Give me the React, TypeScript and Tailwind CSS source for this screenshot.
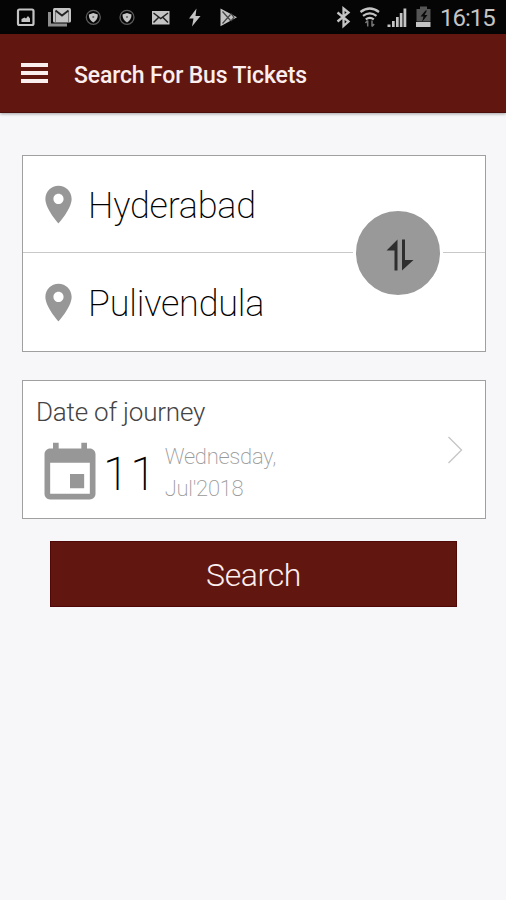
import type { ReactNode } from "react";

const StatusIcons = () => (
  <svg width="240" height="34" viewBox="0 0 240 34" fill="#c4c4c4">
    {/* picture */}
    <rect x="18" y="9.500" width="15.500" height="15.500" rx="1.500" fill="none" stroke="#c4c4c4" strokeWidth="2.200" />
    <path d="M21.500 22v-3l3-1.500 1.500 1 2-2.500 2 2.500v3.500z" />
    {/* stacked mail */}
    <path d="M49.500 12v13H67" fill="none" stroke="#8d8d8d" strokeWidth="3" />
    <rect x="53" y="8" width="18" height="14.500" rx="1.500" />
    <path d="M55.500 22V11M68.500 22V11" fill="none" stroke="#777" strokeWidth="1" />
    <path d="M55.500 10.500l6.500 5 6.500-5" fill="none" stroke="#222" strokeWidth="1.800" />
    {/* round badges */}
    <circle cx="93.300" cy="17.300" r="7" fill="none" stroke="#5c5c5c" strokeWidth="1.300" />
    <path d="M88.800 14.500l4.500-1.500 4.500 1.500c0 4-1.500 6-4.500 8-3-2-4.500-4-4.500-8z" />
    <circle cx="93.300" cy="17" r="1.100" fill="#666" />
    <circle cx="127" cy="17.300" r="7" fill="none" stroke="#5c5c5c" strokeWidth="1.300" />
    <path d="M122.500 14.500l4.500-1.500 4.500 1.500c0 4-1.500 6-4.500 8-3-2-4.500-4-4.500-8z" />
    <circle cx="127" cy="17" r="1.100" fill="#666" />
    {/* envelope */}
    <rect x="152" y="11" width="17.500" height="13.500" />
    <path d="M153.500 13l7.200 5.500 7.300-5.500M153.500 22.500l5-5M168 22.500l-5-5" fill="none" stroke="#222" strokeWidth="1.500" />
    {/* bolt */}
    <path d="M196.500 8.500l-7.500 10h4.500l-1.500 8 8.500-10.500h-5z" />
    {/* play */}
    <path d="M220.500 8.500L237 17.300l-16.500 9z" />
    <path d="M222.500 11.500l8 9M222.500 23.500l8-9M231 13.500l3 3.800-3 3.700" fill="none" stroke="#444" strokeWidth="1.200" />
  </svg>
);

const SystemIcons = () => (
  <svg width="100" height="34" viewBox="334 0 100 34" fill="#c4c4c4">
    {/* bluetooth */}
    <path d="M337.500 12.500l11 9-5 4.500V8.500l5 4-11 9" fill="none" stroke="#c4c4c4" strokeWidth="2.300" />
    {/* wifi with transfer arrows */}
    <g fill="none" stroke="#c4c4c4" strokeWidth="2.200">
      <path d="M360.500 12q9.300-7 18.500 0" />
      <path d="M363 15.800q6.800-5 13.500 0" />
      <path d="M365.800 19.300q4-3 8 0" />
    </g>
    <path d="M367.700 20.500v6M365.500 23l2.200-2.500M372 20.500v6M374.200 24l-2.200 2.500" fill="none" stroke="#777" strokeWidth="1.500" />
    {/* signal */}
    <path d="M387.500 24.500h3v2.500h-3zM392 21h2.700v6H392zM396 17h2.700v10H396zM399.800 13h2.700v14h-2.700zM403.500 8.500h2.800V27h-2.800z" />
    {/* battery */}
    <path d="M420 6.500h7V9h3.500v12.500h-14V9h3.500z" fill="#555" />
    <path d="M416 22h14.500v5H416z" />
    <path d="M425.500 10.500l-5 6h3l-1.500 5.500 5.500-7h-3l2.500-4.500z" fill="#0a0a0a" />
  </svg>
);

const PinIcon = () => (
  <svg className="size-[45px] shrink-0" viewBox="0 0 24 24" fill="#979797">
    <path d="M12 2C8.130 2 5 5.130 5 9c0 5.250 7 13 7 13s7-7.750 7-13c0-3.870-3.130-7-7-7zm0 9.700c-1.500 0-2.700-1.200-2.700-2.700s1.200-2.700 2.700-2.700 2.700 1.200 2.700 2.700-1.200 2.700-2.700 2.700z" />
  </svg>
);

const CalendarIcon = () => (
  <svg className="size-[68px] shrink-0" viewBox="0 0 24 24" fill="#979797">
    <path d="M17 12h-5v5h5v-5zM16 1v2H8V1H6v2H5c-1.110 0-1.990.9-1.990 2L3 19c0 1.100.89 2 2 2h14c1.100 0 2-.9 2-2V5c0-1.100-.9-2-2-2h-1V1h-2zm3 18H5V8h14v11z" />
  </svg>
);

const PlaceRow = ({ children }: Readonly<{ children: ReactNode }>) => (
  <div className="flex flex-1 items-center pl-[13px]">
    <PinIcon />
    <span className="ml-[7px] pt-[4px] text-[36px] leading-none font-[200] tracking-[-0.2px] text-black">
      {children}
    </span>
  </div>
);

export default function App() {
  return (
    <div className="h-[900px] w-[506px] overflow-hidden bg-[#f7f7fa] font-['Roboto',sans-serif]">
      <div className="flex h-[34px] items-center bg-[#050505]">
        <StatusIcons />
        <div className="ml-[94px]">
          <SystemIcons />
        </div>
        <span className="ml-[6px] pt-[2px] text-[24px] leading-none tracking-[-1px] whitespace-nowrap text-[#c4c4c4]">16:15</span>
      </div>

      <header className="flex h-[79px] items-center border-b border-[#4c0f0c] bg-[#611710] pl-[21px] shadow-[0_1px_3px_rgba(0,0,0,0.35)]">
        <div className="flex w-[27px] flex-col gap-[4px]">
          <div className="h-[4px] bg-[#fbeeee]" />
          <div className="h-[4px] bg-[#fbeeee]" />
          <div className="h-[4px] bg-[#fbeeee]" />
        </div>
        <h1 className="ml-[26px] pt-[4px] text-[23px] leading-none font-medium tracking-[-0.15px] text-[#fbeeee]">
          Search For Bus Tickets
        </h1>
      </header>

      <main className="px-[22px] pt-[42px]">
        <section className="relative flex h-[197px] w-[464px] flex-col border border-[#a0a0a0] bg-white">
          <div className="flex h-[97px] border-b border-[#c8c8c8]">
            <PlaceRow>Hyderabad</PlaceRow>
          </div>
          <div className="flex h-[98px]">
            <PlaceRow>Pulivendula</PlaceRow>
          </div>
          <button className="absolute top-[52px] right-[42px] flex size-[90px] items-center justify-center rounded-full border-[3px] border-white bg-[#999999]">
            <svg className="mt-[3px] ml-[3px]" width="28" height="32" viewBox="0 0 28 32" fill="#2e2e2e">
              <path d="M11.500 0.500v31h-3V11.500H0.500zM16 0.500h3v20.500h8.500L16 31.500z" />
            </svg>
          </button>
        </section>

        <section className="mt-[28px] h-[139px] w-[464px] border border-[#a0a0a0] bg-white pt-[18px]">
          <p className="pl-[13px] text-[26px] leading-[26px] font-light tracking-[-0.2px] text-[#444]">
            Date of journey
          </p>
          <div className="mt-[15px] flex h-[68px] pl-[13px]">
            <CalendarIcon />
            <span className="-ml-px text-[47px] leading-[68px] font-[200] tracking-[1.500px] text-black">11</span>
            <div className="ml-[7px] pt-px text-[22px] leading-[32px] font-[200] tracking-[-0.300px] text-[#999]">
              <p>Wednesday,</p>
              <p>Jul'2018</p>
            </div>
            <svg className="mt-[-4px] mr-[22px] ml-auto" width="16" height="28" viewBox="0 0 16 28" fill="none" stroke="#c6c6c6" strokeWidth="1.400">
              <path d="M1.500 1l13 13-13 13" />
            </svg>
          </div>
        </section>

        <button className="mt-[22px] ml-[28px] block h-[66px] w-[407px] border border-[#4f0807] bg-[#611710] pt-[2px] text-[32px] leading-none font-light tracking-[-0.4px] text-[#fbeeee]">
          Search
        </button>
      </main>
    </div>
  );
}
